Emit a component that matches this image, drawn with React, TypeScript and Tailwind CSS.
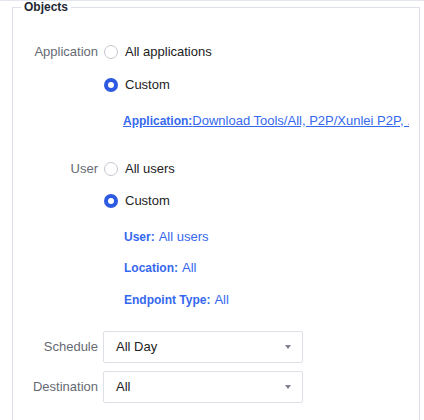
import React, { useState } from "react";

const font = { fontFamily: '"Liberation Sans", Arial, sans-serif' };

function Radio({ checked, label, onClick }: { checked: boolean; label: string; onClick: () => void }) {
  return (
    <button type="button" onClick={onClick} className="flex items-center h-[20px] ml-[6px]">
      {checked ? (
        <span className="w-[14px] h-[14px] rounded-full bg-[#2d5ae0] flex items-center justify-center">
          <span className="w-[6px] h-[6px] rounded-full bg-white" />
        </span>
      ) : (
        <span className="w-[14px] h-[14px] rounded-full border border-[#c4c7cf] bg-white" />
      )}
      <span className="ml-[7px] text-[13px] text-[#222]">{label}</span>
    </button>
  );
}

function Select({ value }: { value: string }) {
  return (
    <div className="ml-[5px] w-[200px] h-[32px] border border-[#dcdfe6] rounded-[2px] bg-white flex items-center justify-between pl-[12px] pr-[11px]">
      <span className="text-[13px] text-[#222]">{value}</span>
      <span className="w-0 h-0 border-l-[3.5px] border-r-[3.5px] border-t-[4px] border-l-transparent border-r-transparent border-t-[#7b818e]" />
    </div>
  );
}

function Detail({ name, value, className = "" }: { name: string; value: string; className?: string }) {
  return (
    <div className={`h-[20px] flex items-center pl-[111px] text-[#3568ee] ${className}`}>
      <span className="text-[12px] font-bold">{name}</span>
      <span className="text-[13px] ml-[4px]">{value}</span>
    </div>
  );
}

export default function App() {
  const [app, setApp] = useState("custom");
  const [user, setUser] = useState("custom");

  return (
    <div style={font} className="w-[424px] h-[420px] overflow-hidden bg-white border-t border-[#e4e7ef]">
      <div className="relative mt-[6px] ml-[12px] w-[408px] h-[440px] border border-[#dfe1ea]">
        <span className="absolute left-[8px] top-[-8px] bg-white px-[3px] text-[12px] leading-[14px] font-bold text-[#1f2733]">
          Objects
        </span>

        <div className="flex items-center h-[20px] mt-[34px]">
          <span className="w-[85px] text-right text-[13px] text-[#666a73]">Application</span>
          <Radio checked={app === "all"} label="All applications" onClick={() => setApp("all")} />
        </div>
        <div className="flex items-center h-[20px] mt-[13px] pl-[85px]">
          <Radio checked={app === "custom"} label="Custom" onClick={() => setApp("custom")} />
        </div>
        <div className="h-[20px] mt-[15px] flex items-center pl-[110px] text-[#3568ee]">
          <a href="#" className="underline whitespace-nowrap overflow-hidden block w-[286px]">
            <span className="text-[12px] font-bold">Application:</span>
            <span className="text-[13px]">Download Tools/All, P2P/Xunlei P2P, ...</span>
          </a>
        </div>

        <div className="flex items-center h-[20px] mt-[29px]">
          <span className="w-[85px] text-right text-[13px] text-[#666a73]">User</span>
          <Radio checked={user === "all"} label="All users" onClick={() => setUser("all")} />
        </div>
        <div className="flex items-center h-[20px] mt-[12px] pl-[85px]">
          <Radio checked={user === "custom"} label="Custom" onClick={() => setUser("custom")} />
        </div>
        <Detail name="User:" value="All users" className="mt-[16px]" />
        <Detail name="Location:" value="All" className="mt-[11px]" />
        <Detail name="Endpoint Type:" value="All" className="mt-[12px]" />

        <div className="flex items-center mt-[21px]">
          <span className="w-[85px] text-right text-[13px] text-[#666a73]">Schedule</span>
          <Select value="All Day" />
        </div>
        <div className="flex items-center mt-[8px]">
          <span className="w-[85px] text-right text-[13px] text-[#666a73]">Destination</span>
          <Select value="All" />
        </div>
      </div>
    </div>
  );
}
